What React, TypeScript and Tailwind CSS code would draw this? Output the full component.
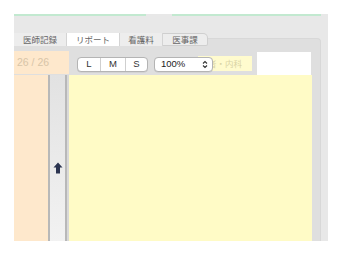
import React from "react";

export default function App() {
  const jp = "font-['Noto_Sans_CJK_JP','Noto_Sans',sans-serif]";
  return (
    <div className="w-[345px] h-[260px] bg-white overflow-hidden font-['Liberation_Sans',Arial,sans-serif]">
      <div className="ml-[14px] pt-[14px]">
        <div className="w-[314px] h-[227px] bg-[#e8e8e8] flex flex-col">
          <div className="flex h-[2px] shrink-0">
            <div className="w-[132px] bg-[#c2e9d0]" />
            <div className="w-[26px]" />
            <div className="w-[149px] bg-[#c2e9d0]" />
          </div>
          <div className="h-[17px] shrink-0" />
          <div className={`flex h-[13px] shrink-0 relative z-10 text-[8.5px] leading-none text-[#666] ${jp}`}>
            <div className="w-[53px] bg-[#ededed] border-r border-[#d4d4d4] flex items-center justify-center">医師記録</div>
            <div className="w-[53px] bg-white border-r border-[#d4d4d4] flex items-center justify-center">リポート</div>
            <div className="w-[43px] bg-[#ededed] border-r border-[#d4d4d4] flex items-center justify-center">看護料</div>
            <div className="w-[45px] bg-[#ededed] border border-l-0 border-[#cfcfcf] rounded-tr-[5px] rounded-br-[2px] flex items-center justify-center">医事課</div>
          </div>
          <div className="mt-[-8px] w-[307px] flex-1 bg-[#dfdfdf] rounded-tr-[4px] border-t border-r border-[#d8d8d8] flex flex-col">
            <div className="h-[12px] shrink-0" />
            <div className="flex h-[24px] shrink-0">
              <div className="w-[55px] h-[23px] bg-[#fee8cc] flex items-center pl-[3px] text-[10.5px] text-[#d8c5a8]">26 / 26</div>
              <div className="ml-[8px] mt-[6px] w-[71px] h-[15px] bg-white border border-[#b4b4b4] rounded-[4px] flex text-[9.5px] text-[#333] shadow-[0_0.5px_0.5px_rgba(0,0,0,0.1)]">
                <div className="w-[23px] flex items-center justify-center border-r border-[#cfcfcf]">L</div>
                <div className="w-[25px] flex items-center justify-center border-r border-[#cfcfcf]">M</div>
                <div className="flex-1 flex items-center justify-center">S</div>
              </div>
              <div className="ml-[6px] mt-[6px] w-[59px] h-[15px] bg-white border border-[#b4b4b4] rounded-[4px] relative z-10 flex items-center pl-[6px] text-[9.5px] text-[#222] shadow-[0_0.5px_0.5px_rgba(0,0,0,0.1)]">
                <span>100%</span>
                <svg className="ml-auto mr-[4px]" width="6" height="9" viewBox="0 0 6 9">
                  <path d="M1 3.5 L3 1.5 L5 3.5" fill="none" stroke="#333" strokeWidth="1.1" />
                  <path d="M1 5.5 L3 7.5 L5 5.5" fill="none" stroke="#333" strokeWidth="1.1" />
                </svg>
              </div>
              <div className={`ml-[-15px] mt-[5px] w-[54px] h-[15px] bg-[#fffbce] flex items-center pl-[10px] text-[8.5px] leading-none text-[#d9d3a4] ${jp}`}>者・内科</div>
              <div className="ml-[5px] mt-[1px] w-[54px] h-[24px] bg-white border-b border-[#d0d0d0]" />
            </div>
            <div className="flex flex-1 pr-[8px]">
              <div className="w-[34px] bg-[#fee8cc]" />
              <div className="w-[19px] border-l-2 border-r-2 border-[#b8b8b8] bg-gradient-to-b from-[#e2e2e2] to-[#f2f2f2] flex items-center justify-center">
                <svg width="10" height="12" viewBox="0 0 10 12" className="mt-[20px]">
                  <path d="M5 0.5 L9.5 5.5 L7 5.5 L7 11.5 L3 11.5 L3 5.5 L0.5 5.5 Z" fill="#2b3450" />
                </svg>
              </div>
              <div className="w-[2px] bg-[#d9d9d9]" />
              <div className="flex-1 bg-[#fffbc6]" />
            </div>
          </div>
        </div>
      </div>
    </div>
  );
}
